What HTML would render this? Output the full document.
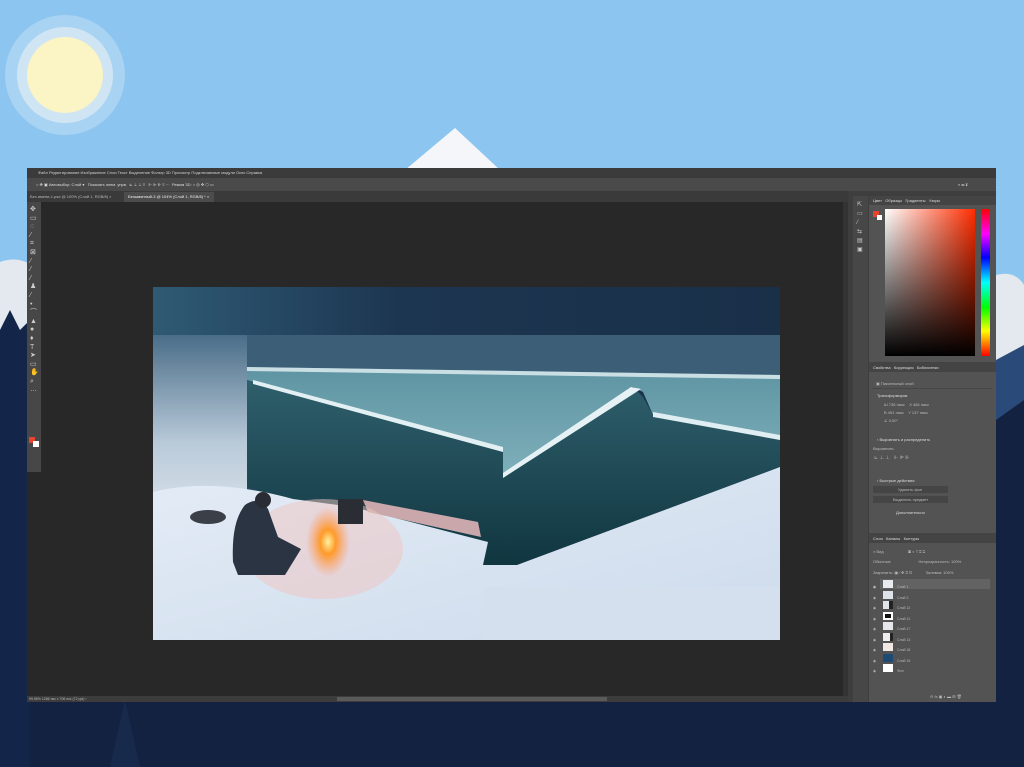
<!DOCTYPE html>
<html><head><meta charset="utf-8"><style>
*{margin:0;padding:0;box-sizing:border-box}
body{width:1024px;height:767px;overflow:hidden;position:relative;background:#132240;font-family:"Liberation Sans",sans-serif}
.a{position:absolute}
.t{position:absolute;color:#bbb;font-size:4px;white-space:nowrap}
</style></head><body>
<svg class="a" style="left:0;top:0" width="1024" height="767">
<rect width="1024" height="767" fill="#132240"/>
<rect width="1024" height="330" fill="#8cc5ef"/>
<circle cx="65" cy="75" r="60" fill="#a9d3f2"/>
<circle cx="65" cy="75" r="48" fill="#cfe5f3"/>
<circle cx="65" cy="75" r="38" fill="#fbf4c4"/>
<polygon points="405,170 455,128 500,170" fill="#f4f6fa"/>
<path d="M0 262 Q20 255 35 268 L35 335 L0 335Z" fill="#e4e8ef"/>
<polygon points="0,330 10,310 20,330 30,320 30,767 0,767" fill="#13264a"/>
<path d="M996 275 Q1015 270 1024 285 L1024 360 L996 360Z" fill="#e4e8ef"/>
<polygon points="996,360 1024,345 1024,400 996,420" fill="#2a4b79"/>
<polygon points="110,767 125,700 140,767" fill="#182a4c"/>
</svg>

<div class="a" style="left:27px;top:168px;width:969px;height:534px;background:#282828"></div>
<div class="a" style="left:27px;top:168px;width:969px;height:10px;background:#3b3b3b"></div>
<div class="t" style="left:38px;top:170px;color:#cfcfcf">Файл Редактирование Изображение Слои Текст Выделение Фильтр 3D Просмотр Подключаемые модули Окно Справка</div>
<div class="a" style="left:27px;top:178px;width:969px;height:13px;background:#4a4a4a"></div>
<div class="t" style="left:36px;top:182px;color:#ddd">⌂ ✥ ▣ Автовыбор: Слой ▾ &nbsp; Показать элем. упрв. &nbsp;⊾ ⊥ ⊥ ≡ &nbsp; ⊩ ⊫ ⊪ ≡ ··· &nbsp;Режим 3D: ○ ◎ ✥ ⬡ ▭</div>
<div class="t" style="left:958px;top:182px;color:#ddd">⌕ ▭ ⇪</div>
<div class="a" style="left:27px;top:191px;width:969px;height:11px;background:#3a3a3a"></div>
<div class="a" style="left:124px;top:192px;width:90px;height:10px;background:#4c4c4c"></div>
<div class="t" style="left:30px;top:194px">Без имени-1.psd @ 100% (Слой 1, RGB/8) ×</div>
<div class="t" style="left:128px;top:194px;color:#eee">Безымянный-3 @ 104% (Слой 1, RGB/8) * ×</div>
<div class="a" style="left:27px;top:202px;width:14px;height:270px;background:#474747"></div>
<div class="t" style="left:30px;top:206px;font-size:7px;line-height:8.6px;color:#ccc;white-space:pre">✥
▭
◌
⁄
⌗
⊠
⁄
⁄
⁄
♟
⁄
•
⌒
▲
●
♦
T
➤
▭
✋
⌕
…</div>
<div class="a" style="left:29px;top:437px;width:6px;height:6px;background:#e3452f"></div>
<div class="a" style="left:33px;top:441px;width:6px;height:6px;background:#fff"></div>
<div class="a" style="left:27px;top:696px;width:821px;height:6px;background:#3c3c3c"></div>
<div class="a" style="left:337px;top:697px;width:270px;height:4px;background:#5a5a5a"></div>
<div class="t" style="left:29px;top:697px;font-size:3.5px">99,96% 1266 пкс x 706 пкс (72 ppi) ›</div>
<div class="a" style="left:843px;top:202px;width:5px;height:494px;background:#333"></div>
<div class="a" style="left:848px;top:191px;width:148px;height:511px;background:#3e3e3e"></div>
<div class="a" style="left:853px;top:196px;width:15px;height:506px;background:#474747"></div>
<div class="t" style="left:857px;top:201px;font-size:6px;line-height:9px;white-space:pre;color:#ccc">⇱
▭
⁄
⇆
▤
▣</div>
<div class="a" style="left:869px;top:196px;width:127px;height:506px;background:#535353"></div>
<div class="a" style="left:869px;top:196px;width:127px;height:9px;background:#444"></div>
<div class="t" style="left:873px;top:198px;color:#ddd">Цвет &nbsp; Образцы &nbsp; Градиенты &nbsp; Узоры</div>
<div class="a" style="left:873px;top:211px;width:6px;height:6px;background:#e3452f"></div>
<div class="a" style="left:877px;top:215px;width:5px;height:5px;background:#fff"></div>
<div class="a" style="left:885px;top:209px;width:90px;height:147px;background:linear-gradient(to bottom,rgba(0,0,0,0),#000),linear-gradient(to right,#fff,#ff2d00)"></div>
<div class="a" style="left:981px;top:209px;width:9px;height:147px;background:linear-gradient(#f00,#f0f 17%,#00f 33%,#0ff 50%,#0f0 67%,#ff0 83%,#f00)"></div>
<div class="a" style="left:869px;top:362px;width:127px;height:10px;background:#444"></div>
<div class="t" style="left:873px;top:365px;color:#ddd">Свойства &nbsp; Коррекция &nbsp; Библиотеки</div>
<div class="t" style="left:876px;top:381px">▣ Пиксельный слой</div>
<div class="a" style="left:872px;top:388px;width:120px;height:48px;border-top:1px solid #474747"></div>
<div class="t" style="left:877px;top:393px;color:#ddd">Трансформиров.</div>
<div class="t" style="left:884px;top:402px">Ш 736 пикс &nbsp;&nbsp; Х 464 пикс</div>
<div class="t" style="left:884px;top:410px">В 491 пикс &nbsp;&nbsp; Y 137 пикс</div>
<div class="t" style="left:884px;top:418px">∠ 0,00°</div>
<div class="t" style="left:877px;top:437px;color:#ddd">› Выровнять и распределить</div>
<div class="t" style="left:873px;top:446px">Выровнять:</div>
<div class="t" style="left:874px;top:455px;font-size:5px">⊾ ⊥ ⊥ &nbsp; ⊩ ⊫ ⊪</div>
<div class="t" style="left:877px;top:478px;color:#ddd">› Быстрые действия</div>
<div class="a" style="left:873px;top:486px;width:75px;height:7px;background:#454545"></div>
<div class="a" style="left:873px;top:496px;width:75px;height:7px;background:#454545"></div>
<div class="t" style="left:898px;top:487px">Удалить фон</div>
<div class="t" style="left:893px;top:497px">Выделить предмет</div>
<div class="t" style="left:896px;top:510px;color:#ddd">Дополнительно</div>
<div class="a" style="left:869px;top:533px;width:127px;height:10px;background:#444"></div>
<div class="t" style="left:873px;top:536px;color:#ddd">Слои &nbsp; Каналы &nbsp; Контуры</div>
<div class="t" style="left:873px;top:549px">⌕ Вид &nbsp;&nbsp;&nbsp;&nbsp;&nbsp;&nbsp;&nbsp;&nbsp;&nbsp;&nbsp;&nbsp;&nbsp;&nbsp;&nbsp;&nbsp;&nbsp;&nbsp;&nbsp;&nbsp;&nbsp; ▣ ◐ T ⌗ ⊡</div>
<div class="t" style="left:873px;top:559px">Обычные &nbsp;&nbsp;&nbsp;&nbsp;&nbsp;&nbsp;&nbsp;&nbsp;&nbsp;&nbsp;&nbsp;&nbsp;&nbsp;&nbsp;&nbsp;&nbsp;&nbsp;&nbsp;&nbsp;&nbsp;&nbsp;&nbsp;&nbsp; Непрозрачность: 100%</div>
<div class="t" style="left:873px;top:570px">Закрепить: ▣ ⁄ ✥ ⌗ ⊡ &nbsp;&nbsp;&nbsp;&nbsp;&nbsp;&nbsp;&nbsp;&nbsp;&nbsp;&nbsp; Заливка: 100%</div>
<div class="a" style="left:880px;top:579px;width:110px;height:10px;background:#636363"></div>
<div class="a" style="left:883px;top:580px;width:10px;height:8px;background:#e8ecef"></div>
<div class="a" style="left:883px;top:591px;width:10px;height:8px;background:#dde2e8"></div>
<div class="a" style="left:883px;top:601px;width:10px;height:8px;background:#e0e4e8;border-right:4px solid #222"></div>
<div class="a" style="left:883px;top:612px;width:10px;height:8px;border:2px solid #fff;background:#111"></div>
<div class="a" style="left:883px;top:622px;width:10px;height:8px;background:#e5e7ea"></div>
<div class="a" style="left:883px;top:633px;width:10px;height:8px;background:#eee;border-right:3px solid #222"></div>
<div class="a" style="left:883px;top:643px;width:10px;height:8px;background:#f1e8e3"></div>
<div class="a" style="left:883px;top:654px;width:10px;height:8px;background:#1f4a73"></div>
<div class="a" style="left:883px;top:664px;width:10px;height:8px;background:#fff"></div>
<div class="t" style="left:873px;top:582px;line-height:10.5px;white-space:pre;font-size:3.5px">◉</div>
<div class="t" style="left:873px;top:582px;line-height:10.5px;white-space:pre;font-size:3.5px">◉
◉
◉
◉
◉
◉
◉
◉
◉</div>
<div class="t" style="left:897px;top:582px;line-height:10.5px;white-space:pre;font-size:3.5px">Слой 1
Слой 2
Слой 12
Слой 11
Слой 17
Слой 13
Слой 18
Слой 15
Фон</div>
<div class="t" style="left:930px;top:694px;font-size:4px">⊖ fx ▣ ◐ ▬ ⊞ 🗑</div>

<svg class="a" style="left:153px;top:287px" width="627" height="353" viewBox="0 0 627 353">
<defs>
<linearGradient id="ns" x1="0" y1="0" x2="1" y2="0"><stop offset="0" stop-color="#2f5a74"/><stop offset="0.4" stop-color="#1c3550"/><stop offset="1" stop-color="#1a3049"/></linearGradient>
<linearGradient id="mist" x1="0" y1="0" x2="0" y2="1"><stop offset="0" stop-color="#4a6d88"/><stop offset="0.6" stop-color="#b9cad9"/><stop offset="1" stop-color="#d8e1ea"/></linearGradient>
<linearGradient id="cliff" x1="0" y1="0" x2="0" y2="1"><stop offset="0" stop-color="#2f5f6c"/><stop offset="1" stop-color="#103640"/></linearGradient>
<linearGradient id="surf" x1="0" y1="0" x2="0" y2="1"><stop offset="0" stop-color="#5e94a2"/><stop offset="1" stop-color="#7fb0bb"/></linearGradient>
<radialGradient id="fire" cx="0.5" cy="0.5" r="0.5"><stop offset="0" stop-color="#fff1a0"/><stop offset="0.35" stop-color="#ff9a2a"/><stop offset="1" stop-color="#ff9a6a" stop-opacity="0"/></radialGradient>
<linearGradient id="sn" x1="0" y1="0" x2="1" y2="1"><stop offset="0" stop-color="#e4ecf6"/><stop offset="1" stop-color="#cddbec"/></linearGradient>
</defs>
<rect width="627" height="353" fill="url(#ns)"/>
<rect x="0" y="48" width="627" height="40" fill="#3d5e77"/>
<rect x="0" y="48" width="94" height="180" fill="url(#mist)"/>
<polygon points="94,80 627,88 627,151 500,128 490,105 480,100 350,190 350,163 94,93" fill="url(#surf)"/>
<polygon points="94,80 627,88 627,92 94,84" fill="#c9dfe4"/>
<polygon points="94,93 350,163 350,190 480,100 490,110 500,128 627,151 627,180 364,278 330,278 94,200" fill="url(#cliff)"/>
<polygon points="100,93 350,160 350,165 100,97" fill="#e3f0f3"/>
<polygon points="350,186 478,100 488,102 350,191" fill="#e5f1f4"/>
<polygon points="500,125 627,148 627,153 500,130" fill="#dfeef2"/>
<path d="M0 205 Q60 190 140 212 L200 220 L335 255 L330 278 L364 278 L627 180 L627 353 L0 353Z" fill="url(#sn)"/>
<rect x="330" y="300" width="297" height="53" fill="#d4e0ee"/>
<polygon points="210,213 325,235 328,250 215,225" fill="#c9a7aa"/>
<ellipse cx="170" cy="262" rx="80" ry="50" fill="#f0c4c0" opacity="0.5"/>
<ellipse cx="175" cy="255" rx="22" ry="35" fill="url(#fire)"/>
<path d="M80 275 Q78 235 92 218 Q106 208 115 222 L125 250 L148 262 L132 288 L85 288Z" fill="#2a3442"/>
<circle cx="110" cy="213" r="8" fill="#2a2c33"/>
<rect x="185" y="212" width="25" height="25" fill="#2a2d33"/>
<ellipse cx="55" cy="230" rx="18" ry="7" fill="#3a3f48"/>
</svg>
</body></html>
